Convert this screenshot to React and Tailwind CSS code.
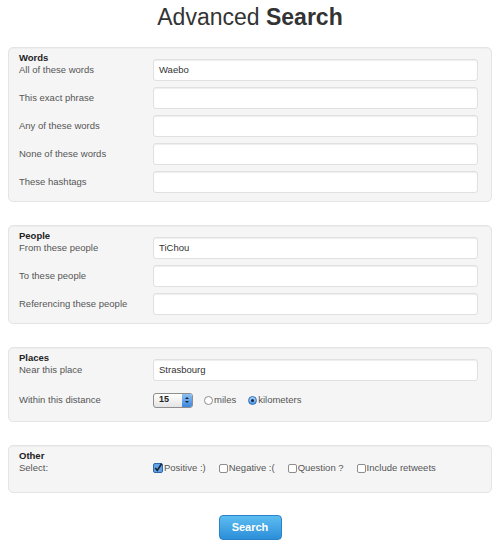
import React from 'react';

const sections = [
  {
    title: 'Words',
    fields: [
      { label: 'All of these words', value: 'Waebo' },
      { label: 'This exact phrase', value: '' },
      { label: 'Any of these words', value: '' },
      { label: 'None of these words', value: '' },
      { label: 'These hashtags', value: '' },
    ],
  },
  {
    title: 'People',
    fields: [
      { label: 'From these people', value: 'TiChou' },
      { label: 'To these people', value: '' },
      { label: 'Referencing these people', value: '' },
    ],
  },
];

const checks = [
  { label: 'Positive :)', checked: true },
  { label: 'Negative :(', checked: false },
  { label: 'Question ?', checked: false },
  { label: 'Include retweets', checked: false },
];

function Well({ children, className = '' }) {
  return (
    <div className={`mx-2 rounded-[5px] border border-[#e4e4e4] bg-[#f5f5f5] pl-[10px] pr-[13px] pt-[4px] shadow-[inset_0_1px_1px_rgba(0,0,0,0.03)] ${className}`}>
      {children}
    </div>
  );
}

function TextBox({ value }) {
  return (
    <div className="flex h-[22px] flex-1 items-center rounded-[3px] border border-[#e0e0e0] bg-white pl-[5px] text-[9.5px] text-[#333] shadow-[inset_0_1px_1px_rgba(0,0,0,0.07)]">
      {value}
    </div>
  );
}

// first row of a well: heading stacked over the label, input lined up with the label
function FirstRow({ title, label, children }) {
  return (
    <div className="flex items-end">
      <div className="flex w-[134px] flex-col pb-[5px]">
        <span className="text-[9.5px] font-bold leading-[12px] text-[#222]">{title}</span>
        <span className="text-[9.5px] leading-[12px] text-[#555]">{label}</span>
      </div>
      {children}
    </div>
  );
}

function Row({ label, children, h = 'h-[22px]' }) {
  return (
    <div className={`mt-[6px] flex items-center ${h}`}>
      <span className="w-[134px] text-[9.5px] text-[#555]">{label}</span>
      {children}
    </div>
  );
}

function Radio({ checked, label }) {
  return (
    <span className="flex items-center">
      {checked ? (
        <span className="flex h-[9px] w-[9px] items-center justify-center rounded-full border border-[#2d6fb8] bg-gradient-to-b from-[#a9d0f5] to-[#4b97e2]">
          <span className="h-[3px] w-[3px] rounded-full bg-[#1d2a3a]" />
        </span>
      ) : (
        <span className="h-[9px] w-[9px] rounded-full border border-[#8d8d8d] bg-white" />
      )}
      <span className="ml-[1px] text-[9.5px] text-[#555]">{label}</span>
    </span>
  );
}

function Check({ checked, label }) {
  return (
    <span className="flex items-center">
      {checked ? (
        <svg width="10" height="10" viewBox="0 0 10 10">
          <rect x="0.5" y="0.5" width="9" height="9" rx="1.5" fill="#5fa3e6" stroke="#2e68a9" />
          <path d="M2.2 5 L4.3 7.4 L8.6 0.8" fill="none" stroke="#1b2430" strokeWidth="1.6" />
        </svg>
      ) : (
        <span className="h-[9px] w-[9px] rounded-[2px] border border-[#8d8d8d] bg-white" />
      )}
      <span className="ml-[1px] text-[9.5px] text-[#555]">{label}</span>
    </span>
  );
}

export default function App() {
  return (
    <div className="bg-white pb-4 font-['Liberation_Sans',Arial,sans-serif]">
      <h1 className="pt-[3px] text-center text-[23px] leading-[28px] text-[#333]">
        <span className="font-light">Advanced </span>
        <span className="font-bold">Search</span>
      </h1>

      <div className="mt-[16px] flex flex-col gap-[23px]">
        {sections.map(sec => (
          <Well key={sec.title} className="pb-[8px]">
            <FirstRow title={sec.title} label={sec.fields[0].label}>
              <TextBox value={sec.fields[0].value} />
            </FirstRow>
            {sec.fields.slice(1).map(f => (
              <Row key={f.label} label={f.label}>
                <TextBox value={f.value} />
              </Row>
            ))}
          </Well>
        ))}

        <Well className="pb-[8px]">
          <FirstRow title="Places" label="Near this place">
            <TextBox value="Strasbourg" />
          </FirstRow>
          <Row label="Within this distance" h="h-[26px]">
            <div className="flex items-center">
              <div className="flex h-[15px] w-[40px] items-center rounded-[3px] border border-[#8e8e8e] bg-gradient-to-b from-white to-[#e4e4e4]">
                <span className="ml-[5px] flex-1 text-[9px] font-bold text-[#222]">15</span>
                <span className="flex h-[13px] w-[10px] flex-col items-center justify-center gap-[2px] rounded-r-[2px] bg-gradient-to-b from-[#8ec0f2] to-[#3a86dc]">
                  <span className="h-0 w-0 border-x-[2px] border-b-[2px] border-x-transparent border-b-[#1a2230]" />
                  <span className="h-0 w-0 border-x-[2px] border-t-[2px] border-x-transparent border-t-[#1a2230]" />
                </span>
              </div>
              <div className="ml-[11px]">
                <Radio label="miles" />
              </div>
              <div className="ml-[12px]">
                <Radio checked label="kilometers" />
              </div>
            </div>
          </Row>
        </Well>

        <Well className="pb-[13px]">
          <FirstRow title="Other" label="Select:">
            <div className="flex h-[22px] items-center gap-[13px]">
              {checks.map(c => (
                <Check key={c.label} checked={c.checked} label={c.label} />
              ))}
            </div>
          </FirstRow>
        </Well>
      </div>

      <div className="mt-[22px] flex justify-center">
        <button className="h-[25px] w-[63px] rounded-[4px] border border-[#2a82c8] bg-gradient-to-b from-[#5cbdf1] to-[#2b8ed8] text-[11px] font-bold text-white">
          Search
        </button>
      </div>
    </div>
  );
}
